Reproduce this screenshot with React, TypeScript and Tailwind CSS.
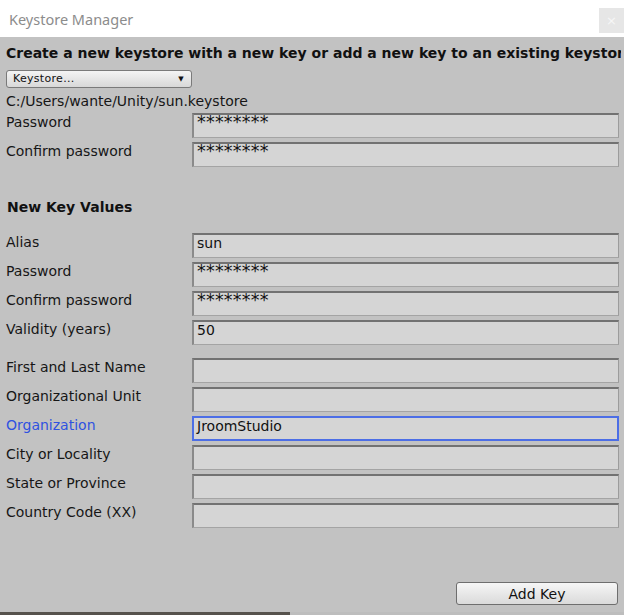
import React from 'react';

type Row = { label: string; value?: string; focused?: boolean; masked?: boolean };

const Field: React.FC<Row> = ({ label, value, focused, masked }) => (
  <div className="flex h-[25px] items-start">
    <div className={`w-[186px] pt-[1px] ${focused ? 'text-[#2f52e0]' : 'text-[#161616]'}`}>{label}</div>
    <div
      className={`flex-1 h-[25px] bg-[#d5d5d5] px-[3px] text-[#111] ${
        masked ? 'text-[17.5px] leading-[15px] tracking-[0.2px]' : 'text-[14px] leading-[16px]'
      } ${
        focused
          ? 'border-2 border-[#4c6ee6]'
          : 'border border-t-2 border-l-2 border-t-[#727272] border-l-[#8a8a8a] border-b-[#a4a4a4] border-r-[#9c9c9c]'
      }`}
    >
      {value}
    </div>
  </div>
);

const App: React.FC = () => {
  const keystoreRows: Row[] = [
    { label: 'Password', value: '********', masked: true },
    { label: 'Confirm password', value: '********', masked: true },
  ];
  const keyRows: Row[] = [
    { label: 'Alias', value: 'sun' },
    { label: 'Password', value: '********', masked: true },
    { label: 'Confirm password', value: '********', masked: true },
    { label: 'Validity (years)', value: '50' },
  ];
  const dnRows: Row[] = [
    { label: 'First and Last Name' },
    { label: 'Organizational Unit' },
    { label: 'Organization', value: 'JroomStudio', focused: true },
    { label: 'City or Locality' },
    { label: 'State or Province' },
    { label: 'Country Code (XX)' },
  ];

  return (
    <div className="w-[624px] h-[615px] flex flex-col overflow-hidden font-[family-name:'DejaVu_Sans',sans-serif] text-[14px] leading-[16px]">
      {/* title bar */}
      <div className="h-[37px] bg-white flex items-start justify-between shrink-0">
        <div className="pl-[9px] pt-[9px] font-[family-name:'Noto_Sans',sans-serif] text-[14.5px] leading-[20px] text-[#8c8c8c]">Keystore Manager</div>
        <div className="mt-[8px] w-[25px] h-[25px] bg-[#e6e6e6] flex items-center justify-center text-[13px] text-[#f6f6f6]">×</div>
      </div>

      {/* body */}
      <div className="flex-1 bg-[#c2c2c2] pl-[6px] pr-[6px] flex flex-col">
        <div className="mt-[8px] mr-[-3px] font-bold text-[#111] whitespace-nowrap overflow-hidden">
          Create a new keystore with a new key or add a new key to an existing keystore
        </div>
        <div className="mt-[9px] w-[186px] h-[18px] rounded-[3px] border border-[#7a7a7a] bg-gradient-to-b from-[#f4f4f4] to-[#d8d8d8] flex items-center justify-between pl-[6px] pr-[7px] text-[11px] text-[#111] tracking-[0.3px]">
          <span>Keystore...</span>
          <span className="text-[7px]">▼</span>
        </div>
        <div className="mt-[5px] text-[#161616]">C:/Users/wante/Unity/sun.keystore</div>

        <div className="mt-[4px] flex flex-col gap-[4px] mr-[-1px]">
          {keystoreRows.map((r, i) => (
            <Field key={i} {...r} />
          ))}
        </div>

        <div className="mt-[32px] pl-[1px] font-bold text-[#111]">New Key Values</div>

        <div className="mt-[18px] flex flex-col gap-[4px] mr-[-1px]">
          {keyRows.map((r, i) => (
            <Field key={i} {...r} />
          ))}
        </div>

        <div className="mt-[13px] flex flex-col gap-[4px] mr-[-1px]">
          {dnRows.map((r, i) => (
            <Field key={i} {...r} />
          ))}
        </div>

        <div className="flex-1 flex items-end justify-end pb-[7px]">
          <button className="w-[162px] h-[23px] rounded-[3px] border border-[#6e6e6e] bg-gradient-to-b from-[#f6f6f6] to-[#dadada] text-[14px] text-[#111]">
            Add Key
          </button>
        </div>
      </div>

      {/* bottom strip */}
      <div className="h-[3px] flex shrink-0">
        <div className="w-[290px] bg-[#56524c]" />
        <div className="flex-1 bg-[#bdbdbd]" />
      </div>
    </div>
  );
};

export default App;
